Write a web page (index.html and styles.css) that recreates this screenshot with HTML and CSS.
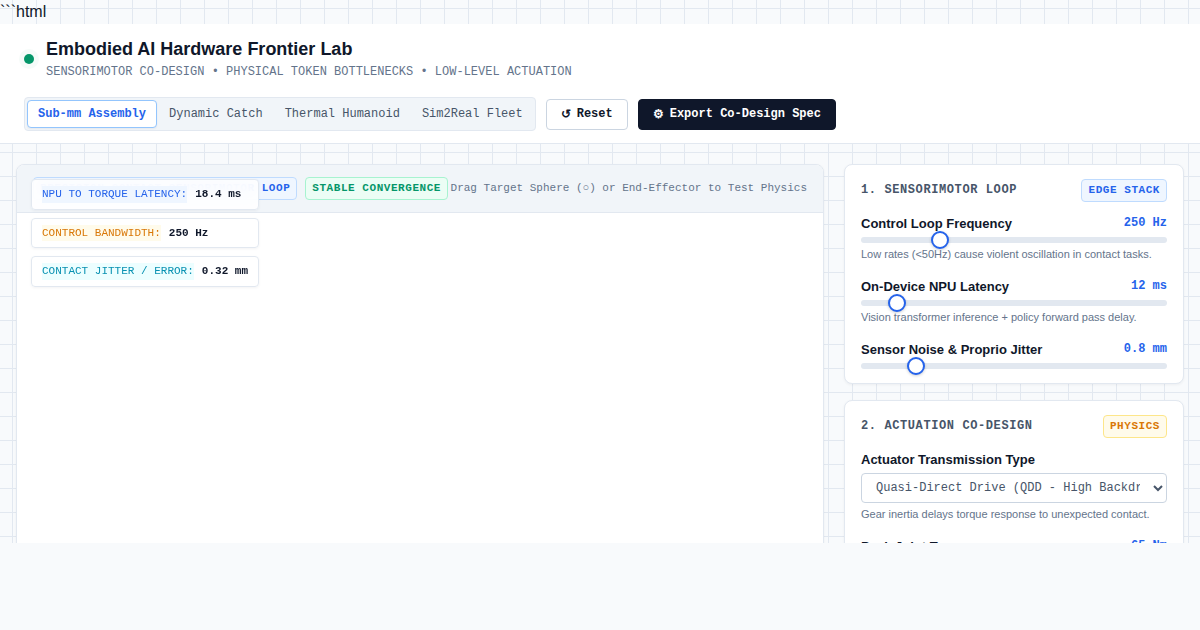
FILE: index.html
```
<!DOCTYPE html>
<html lang="en">
<head>
  <meta charset="UTF-8">
  <meta name="viewport" content="width=device-width, initial-scale=1.0">
  <title>Embodied AI Hardware Frontier Lab</title>
  <link rel="stylesheet" href="styles.css">
</head>
<body>
  <div class="app">
    <div class="fence">```html</div>

    <header class="topbar">
      <div class="brand">
        <span class="status-dot"></span>
        <div>
          <h1>Embodied AI Hardware Frontier Lab</h1>
          <p class="subtitle">SENSORIMOTOR CO-DESIGN • PHYSICAL TOKEN BOTTLENECKS • LOW-LEVEL ACTUATION</p>
        </div>
      </div>
      <div class="actions">
        <nav class="tabs">
          <button type="button" class="tab active">Sub-mm Assembly</button>
          <button type="button" class="tab">Dynamic Catch</button>
          <button type="button" class="tab">Thermal Humanoid</button>
          <button type="button" class="tab">Sim2Real Fleet</button>
        </nav>
        <button type="button" class="btn"><span class="btn-icon">↺</span> Reset</button>
        <button type="button" class="btn btn-dark"><span class="btn-icon">⚙</span> Export Co-Design Spec</button>
      </div>
    </header>

    <main class="workspace">
      <section class="viewport">
        <div class="viewport-header">
          <div class="badges">
            <span class="badge blue">PRECISION CONTACT SENSORIMOTOR LOOP</span>
            <span class="badge green">STABLE CONVERGENCE</span>
          </div>
          <span class="viewport-hint">Drag Target Sphere (○) or End-Effector to Test Physics</span>
        </div>
        <div class="telemetry">
          <div class="metric"><span class="metric-name blue">NPU TO TORQUE LATENCY:</span><strong>18.4 ms</strong></div>
          <div class="metric"><span class="metric-name amber">CONTROL BANDWIDTH:</span><strong>250 Hz</strong></div>
          <div class="metric"><span class="metric-name cyan">CONTACT JITTER / ERROR:</span><strong>0.32 mm</strong></div>
        </div>
      </section>

      <aside class="sidebar">
        <section class="card">
          <div class="card-header">
            <h2>1. SENSORIMOTOR LOOP</h2>
            <span class="badge blue">EDGE STACK</span>
          </div>
          <div class="control">
            <div class="control-row">
              <label for="freq">Control Loop Frequency</label>
              <output for="freq">250 Hz</output>
            </div>
            <input type="range" id="freq" min="10" max="1000" value="250">
            <p class="help">Low rates (&lt;50Hz) cause violent oscillation in contact tasks.</p>
          </div>
          <div class="control">
            <div class="control-row">
              <label for="latency">On-Device NPU Latency</label>
              <output for="latency">12 ms</output>
            </div>
            <input type="range" id="latency" min="5" max="80" value="12">
            <p class="help">Vision transformer inference + policy forward pass delay.</p>
          </div>
          <div class="control">
            <div class="control-row">
              <label for="noise">Sensor Noise &amp; Proprio Jitter</label>
              <output for="noise">0.8 mm</output>
            </div>
            <input type="range" id="noise" min="0" max="5" step="0.1" value="0.8">
          </div>
        </section>

        <section class="card">
          <div class="card-header">
            <h2>2. ACTUATION CO-DESIGN</h2>
            <span class="badge amber">PHYSICS</span>
          </div>
          <div class="control">
            <div class="control-row">
              <label for="actuator">Actuator Transmission Type</label>
            </div>
            <select id="actuator">
              <option>Quasi-Direct Drive (QDD - High Backdrivability)</option>
            </select>
            <p class="help">Gear inertia delays torque response to unexpected contact.</p>
          </div>
          <div class="control">
            <div class="control-row">
              <label for="torque">Peak Joint Torque</label>
              <output for="torque">65 Nm</output>
            </div>
            <input type="range" id="torque" min="10" max="200" value="65">
          </div>
        </section>
      </aside>
    </main>
  </div>
</body>
</html>
```
FILE: styles.css
```
* {
  box-sizing: border-box;
  margin: 0;
  padding: 0;
}

:root {
  --mono: "Liberation Mono", monospace;
  --ink: #0f172a;
  --slate: #475569;
  --muted: #64748b;
  --line: #e2e8f0;
  --blue: #2563eb;
}

body {
  font-family: "Liberation Sans", Arial, sans-serif;
  font-size: 16px;
  line-height: 1.5;
  color: var(--ink);
  background: #f8fafc;
}

/* grid paper behind the whole app */
.app {
  display: flex;
  flex-direction: column;
  height: calc(100vh - 87px);
  overflow: hidden;
  background-image:
    linear-gradient(to right, var(--line) 1px, transparent 1px),
    linear-gradient(to bottom, var(--line) 1px, transparent 1px);
  background-size: 24px 24px;
  background-position: 12px 8px;
}

.topbar {
  display: flex;
  flex-wrap: wrap;
  flex-shrink: 0;
  justify-content: space-between;
  align-items: center;
  gap: 16px;
  padding: 12px 24px;
  background: #fff;
  border-bottom: 1px solid var(--line);
}

.brand {
  display: flex;
  align-items: center;
  gap: 12px;
}

.status-dot {
  width: 10px;
  height: 10px;
  border-radius: 50%;
  background: #059669;
  box-shadow: 0 0 0 5px rgba(5, 150, 105, 0.04);
}

h1 {
  font-size: 18px;
  font-weight: 700;
}

.subtitle {
  font-family: var(--mono);
  font-size: 12px;
  color: var(--muted);
}

.actions {
  display: flex;
  flex-wrap: wrap;
  align-items: center;
  gap: 10px;
}

.tabs {
  display: flex;
  gap: 2px;
  padding: 2px;
  background: #f1f5f9;
  border: 1px solid var(--line);
  border-radius: 4px;
}

.tab {
  padding: 6px 10px;
  font-family: var(--mono);
  font-size: 12px;
  color: var(--slate);
  background: transparent;
  border: none;
  border-radius: 4px;
  cursor: pointer;
}

.tab.active {
  font-weight: 700;
  color: var(--blue);
  background: #fff;
  border: 1px solid #93c5fd;
  box-shadow: 0 1px 2px rgba(15, 23, 42, 0.05);
}

.btn {
  display: inline-flex;
  align-items: center;
  gap: 6px;
  padding: 7px 14px;
  font-family: var(--mono);
  font-size: 12px;
  font-weight: 700;
  color: var(--ink);
  background: #fff;
  border: 1px solid #cbd5e1;
  border-radius: 4px;
  cursor: pointer;
}

.btn-icon {
  font-family: "Liberation Mono";
}

.btn-dark {
  color: #fff;
  background: var(--ink);
  border-color: var(--ink);
}

.workspace {
  display: grid;
  grid-template-columns: minmax(0, 1fr) 340px;
  gap: 20px;
  flex: 1;
  min-height: 0;
  padding: 20px 16px;
}

.viewport,
.card {
  background: #fff;
  border: 1px solid var(--line);
  border-radius: 8px;
  box-shadow: 0 1px 3px rgba(15, 23, 42, 0.05);
}

.viewport {
  position: relative;
  min-height: 560px;
  overflow: hidden;
}

.viewport-header {
  display: flex;
  justify-content: space-between;
  align-items: center;
  padding: 12px 16px;
  background: #f1f5f9;
  border-bottom: 1px solid var(--line);
}

.viewport-hint {
  font-family: var(--mono);
  font-size: 11px;
  color: var(--muted);
}

.badges {
  display: flex;
  gap: 8px;
}

.badge {
  padding: 2px 6px;
  font-family: var(--mono);
  font-size: 11px;
  font-weight: 700;
  letter-spacing: 0.05em;
  white-space: nowrap;
  border: 1px solid;
  border-radius: 4px;
}

.blue {
  color: var(--blue);
  background: #eff6ff;
  border-color: #bfdbfe;
}

.green {
  color: #059669;
  background: #ecfdf5;
  border-color: #a7f3d0;
}

.amber {
  color: #d97706;
  background: #fffbeb;
  border-color: #fde68a;
}

.cyan {
  color: #0891b2;
  background: #ecfeff;
}

/* readouts float over the canvas */
.telemetry {
  position: absolute;
  top: 14px;
  left: 14px;
  display: flex;
  flex-direction: column;
  gap: 8px;
}

.metric {
  display: flex;
  gap: 8px;
  padding: 6px 10px;
  font-family: var(--mono);
  font-size: 11px;
  background: rgba(255, 255, 255, 0.9);
  border: 1px solid var(--line);
  border-radius: 4px;
  box-shadow: 0 1px 3px rgba(15, 23, 42, 0.05);
  backdrop-filter: blur(8px);
}

.sidebar {
  display: flex;
  flex-direction: column;
  gap: 16px;
}

.card {
  display: flex;
  flex-direction: column;
  flex-shrink: 0;
  gap: 14px;
  padding: 14px 16px;
}

.card-header {
  display: flex;
  justify-content: space-between;
  align-items: center;
  margin-bottom: -2px;
}

h2 {
  font-family: var(--mono);
  font-size: 12px;
  font-weight: 700;
  letter-spacing: 0.05em;
  color: var(--slate);
}

.control-row {
  display: flex;
  justify-content: space-between;
  margin-bottom: 4px;
}

.control-row label {
  font-size: 13px;
  font-weight: 700;
}

.control-row output {
  font-family: var(--mono);
  font-size: 12px;
  font-weight: 700;
  color: var(--blue);
}

.help {
  margin-top: 3px;
  font-size: 11px;
  color: var(--muted);
}

input[type="range"] {
  display: block;
  width: 100%;
  height: 6px;
  appearance: none;
  background: var(--line);
  border-radius: 3px;
  cursor: pointer;
}

input[type="range"]::-webkit-slider-thumb {
  width: 18px;
  height: 18px;
  appearance: none;
  background: #fff;
  border: 2px solid var(--blue);
  border-radius: 50%;
  box-shadow: 0 1px 3px rgba(15, 23, 42, 0.2);
}

select {
  display: block;
  width: 100%;
  padding: 6px 10px;
  font-family: var(--mono);
  font-size: 12px;
  color: var(--slate);
  background: #fff;
  border: 1px solid #cbd5e1;
  border-radius: 4px;
}
```
